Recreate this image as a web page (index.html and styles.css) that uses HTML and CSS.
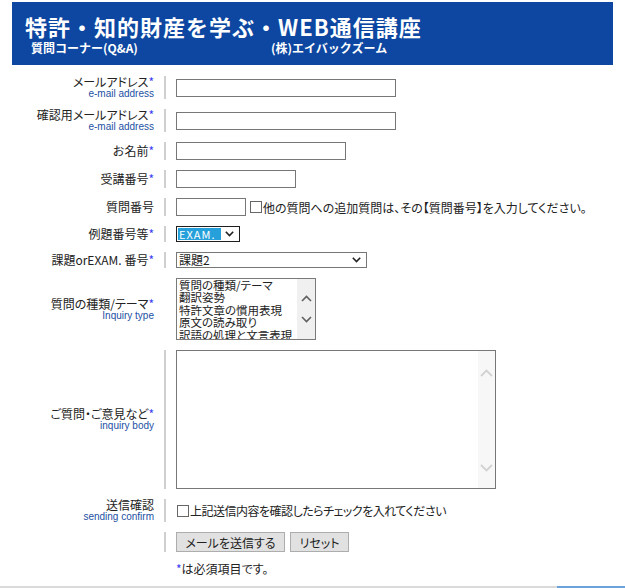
FILE: index.html
```html
<!DOCTYPE html>
<html lang="ja">

<head>
  <meta charset="UTF-8">
  <meta name="viewport" content="width=device-width, initial-scale=1.0">
  <title>質問コーナー(Q&amp;A)</title>
  <link rel="stylesheet" href="styles.css">
</head>

<body>
  <header class="banner">
    <h1 class="banner-title">特許・知的財産を学ぶ・WEB通信講座</h1>
    <div class="banner-sub">
      <span class="banner-corner">質問コーナー(Q&amp;A)</span>
      <span>(株)エイバックズーム</span>
    </div>
  </header>

  <form class="qa-form">
    <!-- メールアドレス -->
    <div class="qa-row">
      <div class="qa-label">
        <div>メールアドレス<span class="req">*</span></div>
        <div class="qa-label-en">e-mail address</div>
      </div>
      <div class="qa-sep"></div>
      <div class="qa-field"><input class="qa-text w220" type="text"></div>
    </div>

    <div class="qa-row">
      <div class="qa-label">
        <div>確認用メールアドレス<span class="req">*</span></div>
        <div class="qa-label-en">e-mail address</div>
      </div>
      <div class="qa-sep"></div>
      <div class="qa-field"><input class="qa-text w220" type="text"></div>
    </div>

    <div class="qa-row">
      <div class="qa-label">お名前<span class="req">*</span></div>
      <div class="qa-sep"></div>
      <div class="qa-field"><input class="qa-text w170" type="text"></div>
    </div>

    <div class="qa-row">
      <div class="qa-label">受講番号<span class="req">*</span></div>
      <div class="qa-sep"></div>
      <div class="qa-field"><input class="qa-text w120" type="text"></div>
    </div>

    <div class="qa-row">
      <div class="qa-label">質問番号</div>
      <div class="qa-sep"></div>
      <div class="qa-field">
        <input class="qa-text w70" type="text">
        <input class="qa-check" type="checkbox">
        <span>他の質問への追加質問は、その【質問番号】を入力してください。</span>
      </div>
    </div>

    <div class="qa-row">
      <div class="qa-label">例題番号等<span class="req">*</span></div>
      <div class="qa-sep"></div>
      <div class="qa-field">
        <div class="qa-select qa-select-focus">
          <span class="qa-select-value">EXAM.</span>
          <svg class="chev" width="9" height="6" viewBox="0 0 9 6"><polyline points="0.8,0.8 4.5,4.6 8.2,0.8" /></svg>
        </div>
      </div>
    </div>

    <div class="qa-row">
      <div class="qa-label">課題orEXAM. 番号<span class="req">*</span></div>
      <div class="qa-sep"></div>
      <div class="qa-field">
        <div class="qa-select w191">
          <span class="qa-select-text">課題2</span>
          <svg class="chev" width="9" height="6" viewBox="0 0 9 6"><polyline points="0.8,0.8 4.5,4.6 8.2,0.8" /></svg>
        </div>
      </div>
    </div>

    <div class="qa-row">
      <div class="qa-label">
        <div>質問の種類/テーマ<span class="req">*</span></div>
        <div class="qa-label-en">Inquiry type</div>
      </div>
      <div class="qa-sep qa-sep-none"></div>
      <div class="qa-field">
        <div class="qa-list" role="listbox">
          <div class="qa-list-items">
            <div>質問の種類/テーマ</div>
            <div>翻訳姿勢</div>
            <div>特許文章の慣用表現</div>
            <div>原文の読み取り</div>
            <div>訳語の処理と文言表現</div>
          </div>
          <div class="qa-list-bar">
            <svg width="11" height="7" viewBox="0 0 11 7"><polyline points="1,6 5.5,1.5 10,6" /></svg>
            <svg width="11" height="7" viewBox="0 0 11 7"><polyline points="1,1 5.5,5.5 10,1" /></svg>
          </div>
        </div>
      </div>
    </div>

    <div class="qa-row">
      <div class="qa-label">
        <div>ご質問・ご意見など<span class="req">*</span></div>
        <div class="qa-label-en">inquiry body</div>
      </div>
      <div class="qa-sep"></div>
      <div class="qa-field">
        <div class="qa-area-wrap">
          <textarea class="qa-area"></textarea>
          <div class="qa-area-bar">
            <svg width="13" height="8" viewBox="0 0 13 8"><polyline points="1,7 6.5,1.5 12,7" /></svg>
            <svg width="13" height="8" viewBox="0 0 13 8"><polyline points="1,1 6.5,6.5 12,1" /></svg>
          </div>
        </div>
      </div>
    </div>

    <div class="qa-row">
      <div class="qa-label">
        <div>送信確認</div>
        <div class="qa-label-en">sending confirm</div>
      </div>
      <div class="qa-sep"></div>
      <div class="qa-field">
        <input class="qa-check qa-check-first" type="checkbox">
        <span class="qa-tight">上記送信内容を確認したらチェックを入れてください</span>
      </div>
    </div>

    <div class="qa-row">
      <div class="qa-label"></div>
      <div class="qa-sep"></div>
      <div class="qa-field qa-buttons">
        <button class="qa-btn w109" type="button">メールを送信する</button>
        <button class="qa-btn w59" type="reset">リセット</button>
      </div>
    </div>

    <div class="qa-row">
      <div class="qa-label"></div>
      <div class="qa-sep qa-sep-none"></div>
      <div class="qa-field qa-note"><span class="req">*</span>は必須項目です。</div>
    </div>
  </form>

  <div class="bottom-line">
    <div class="bottom-gray"></div>
    <div class="bottom-blue"></div>
  </div>
</body>

</html>
```

FILE: styles.css
```css
* {
  padding: 0;
  margin: 0;
  box-sizing: border-box;
}

body {
  font-family: "Noto Sans CJK JP", "Noto Sans", sans-serif;
  font-size: 12px;
  color: #222;
  background: #fff;
  overflow: hidden;
}

/* header */
.banner {
  margin: 2px 12px 0;
  height: 63px;
  background: #0d47a1;
  color: #fff;
  padding: 11px 0 0 13px;
}

.banner-title {
  font-size: 22px;
  font-weight: 700;
  line-height: 26px;
  letter-spacing: 1px;
}

.banner-sub {
  display: flex;
  margin-top: 2px;
  padding-left: 6px;
  font-size: 12px;
  font-weight: 700;
  line-height: 14px;
}

.banner-corner {
  width: 240px;
}

/* form */
.qa-form {
  margin-top: 11px;
  font-feature-settings: "palt";
}

.qa-row {
  display: grid;
  grid-template-columns: 154px 2px auto;
  column-gap: 10px;
  align-items: center;
  margin-bottom: 10px;
}

.qa-label {
  text-align: right;
  line-height: 12px;
}

.qa-label-en {
  font-family: "Liberation Sans", Arial, sans-serif;
  font-size: 10px;
  line-height: 11px;
  color: #1c4fa3;
}

.req {
  color: #3c3cf0;
}

.qa-sep {
  align-self: stretch;
  background: #cfcfcf;
}

.qa-sep-none {
  background: transparent;
}

.qa-field {
  display: flex;
  align-items: center;
}

.qa-tight {
  letter-spacing: -0.5px;
}

.qa-text {
  height: 18px;
  border: 1px solid #777;
  background: #fff;
  outline: none;
}

.w220 { width: 220px; }
.w170 { width: 170px; }
.w120 { width: 120px; }
.w70 { width: 70px; }
.w191 { width: 191px; }
.w109 { width: 109px; }
.w59 { width: 59px; }

.qa-check {
  appearance: none;
  width: 12px;
  height: 12px;
  border: 1px solid #666;
  background: #fff;
  margin: 0 1px 0 4px;
}

.qa-check-first {
  margin-left: 1px;
}

/* selects */
.qa-select {
  height: 16px;
  border: 1px solid #777;
  display: flex;
  align-items: center;
  justify-content: space-between;
  padding: 0 5px 0 2px;
  line-height: 12px;
}

.qa-select-focus {
  width: 64px;
  border-color: #1e1e1e;
  padding: 1px 5px 1px 1px;
}

.qa-select-value {
  width: 43px;
  height: 12px;
  background: #26a0da;
  color: #fff;
  letter-spacing: 1px;
  padding-left: 1px;
  font-size: 11px;
}

.chev polyline {
  fill: none;
  stroke: #222;
  stroke-width: 1.6;
}

/* listbox */
.qa-list {
  width: 140px;
  height: 62px;
  border: 1px solid #7a7a7a;
  display: flex;
  overflow: hidden;
}

.qa-list-items {
  flex: 1;
  padding-left: 2px;
  font-size: 11.5px;
  line-height: 12.4px;
  white-space: nowrap;
  overflow: hidden;
}

.qa-list-bar {
  width: 18px;
  background: #f0f0f0;
  display: flex;
  flex-direction: column;
  align-items: center;
  justify-content: center;
  row-gap: 14px;
}

.qa-list-bar polyline {
  fill: none;
  stroke: #606060;
  stroke-width: 1.6;
}

/* textarea */
.qa-area-wrap {
  position: relative;
  width: 320px;
  height: 139px;
}

.qa-area {
  display: block;
  width: 100%;
  height: 100%;
  border: 1px solid #777;
  resize: none;
  overflow: hidden;
  outline: none;
}

.qa-area-bar {
  position: absolute;
  top: 1px;
  right: 1px;
  bottom: 1px;
  width: 17px;
  background: #f7f7f7;
  display: flex;
  flex-direction: column;
  align-items: center;
  justify-content: space-between;
  padding: 18px 0 16px;
}

.qa-area-bar polyline {
  fill: none;
  stroke: #d2d2d2;
  stroke-width: 1.8;
}

/* buttons */
.qa-buttons {
  column-gap: 5px;
}

.qa-btn {
  height: 20px;
  border: 1px solid #adadad;
  background: #e1e1e1;
  font-family: "Noto Sans CJK JP", sans-serif;
  font-feature-settings: "palt";
  font-size: 12px;
  color: #222;
}

.qa-note {
  line-height: 14px;
}

/* bottom line */
.bottom-line {
  display: flex;
  height: 2px;
}

.bottom-gray {
  flex: 1;
  background: #dadada;
}

.bottom-blue {
  width: 68px;
  background: #6aa2dc;
}
```
